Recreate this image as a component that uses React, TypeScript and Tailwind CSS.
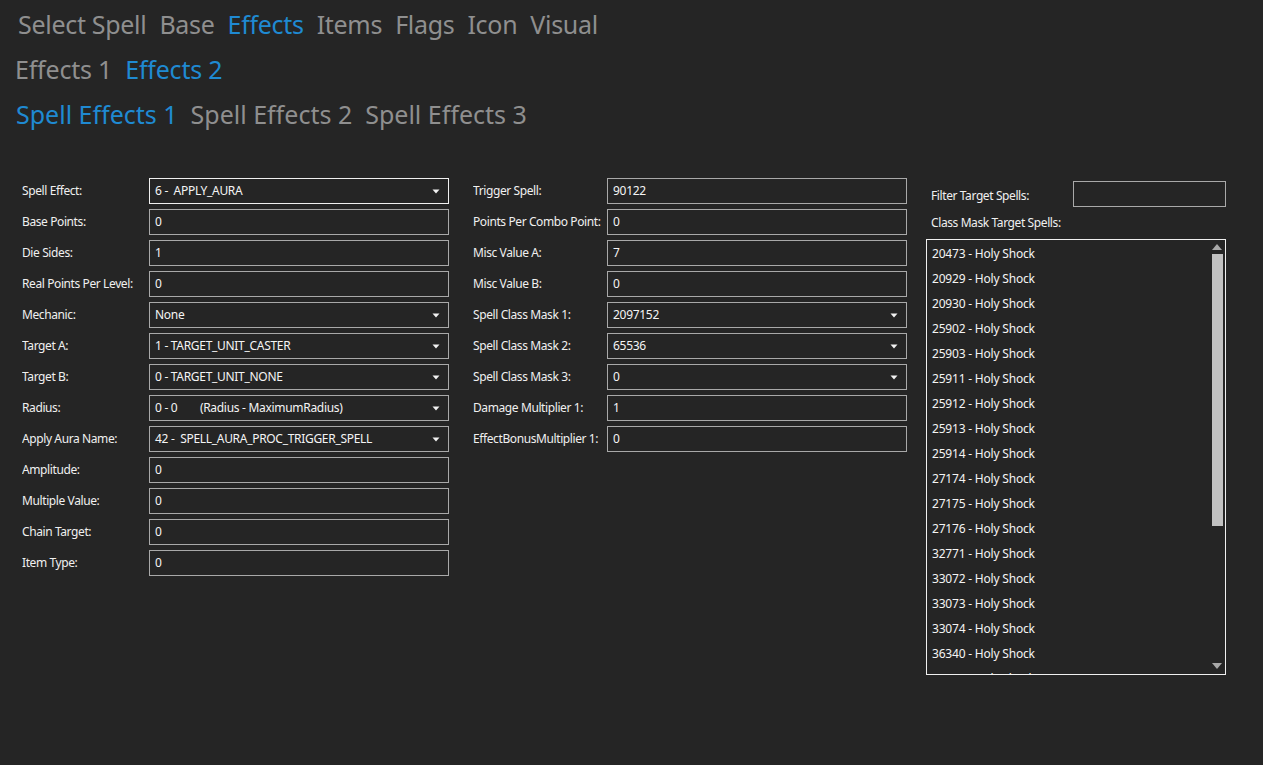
import React from "react";

const font = { fontFamily: '"Noto Sans", "Open Sans", sans-serif' };

function Tabs({ items, active, className }: { items: string[]; active: number; className: string }) {
  return (
    <div className={className}>
      {items.map((t, i) => (
        <span key={t} className={i === active ? "text-[#1f8ad2]" : "text-[#8f8f8f]"}>
          {t}
        </span>
      ))}
    </div>
  );
}

function Arrow() {
  return (
    <svg width="8" height="5" viewBox="0 0 8 5" className="shrink-0">
      <path d="M0.5 0.5 L7.5 0.5 L4 4.5 Z" fill="#f2f2f2" />
    </svg>
  );
}

function Field({ value, select, focus }: { value: React.ReactNode; select?: boolean; focus?: boolean }) {
  return (
    <div
      className={`flex h-[26px] flex-1 items-center justify-between border px-[5px] text-[12px] tracking-[-0.3px] text-[#f4f4f4] ${
        focus ? "border-[#f0f0f0]" : "border-[#a9a9a9]"
      }`}
    >
      <span className="whitespace-pre">{value}</span>
      {select && (
        <span className="mr-[3px]">
          <Arrow />
        </span>
      )}
    </div>
  );
}

function Row({ label, value, select, focus, lw }: { label: string; value: React.ReactNode; select?: boolean; focus?: boolean; lw: string }) {
  return (
    <div className="flex items-center">
      <div className={`${lw} shrink-0 overflow-hidden whitespace-nowrap text-[12px] tracking-[-0.4px] text-[#f0f0f0]`}>{label}</div>
      <Field value={value} select={select} focus={focus} />
    </div>
  );
}

const col1: [string, React.ReactNode, boolean?, boolean?][] = [
  ["Spell Effect:", "6 -  APPLY_AURA", true, true],
  ["Base Points:", "0"],
  ["Die Sides:", "1"],
  ["Real Points Per Level:", "0"],
  ["Mechanic:", "None", true],
  ["Target A:", "1 - TARGET_UNIT_CASTER", true],
  ["Target B:", "0 - TARGET_UNIT_NONE", true],
  ["Radius:", "0 - 0        (Radius - MaximumRadius)", true],
  ["Apply Aura Name:", "42 -  SPELL_AURA_PROC_TRIGGER_SPELL", true],
  ["Amplitude:", "0"],
  ["Multiple Value:", "0"],
  ["Chain Target:", "0"],
  ["Item Type:", "0"],
];

const col2: [string, React.ReactNode, boolean?][] = [
  ["Trigger Spell:", "90122"],
  ["Points Per Combo Point:", "0"],
  ["Misc Value A:", "7"],
  ["Misc Value B:", "0"],
  ["Spell Class Mask 1:", "2097152", true],
  ["Spell Class Mask 2:", "65536", true],
  ["Spell Class Mask 3:", "0", true],
  ["Damage Multiplier 1:", "1"],
  ["EffectBonusMultiplier 1:", "0"],
];

const spells = [
  "20473", "20929", "20930", "25902", "25903", "25911", "25912", "25913", "25914",
  "27174", "27175", "27176", "32771", "33072", "33073", "33074", "36340", "38384",
];

export default function App() {
  return (
    <div className="min-h-[765px] w-full bg-[#252525]" style={font}>
      <div className="pt-[2px]">
        <Tabs
          className="flex h-[45px] items-center gap-[13px] pl-[18px] text-[25px] tracking-[-0.3px]"
          items={["Select Spell", "Base", "Effects", "Items", "Flags", "Icon", "Visual"]}
          active={2}
        />
        <Tabs
          className="flex h-[45px] items-center gap-[13px] pl-[15px] text-[25px] tracking-[-0.2px]"
          items={["Effects 1", "Effects 2"]}
          active={1}
        />
        <Tabs
          className="flex h-[45px] items-center gap-[13px] pl-[16px] text-[25px] tracking-[0px]"
          items={["Spell Effects 1", "Spell Effects 2", "Spell Effects 3"]}
          active={0}
        />
      </div>
      <div className="mt-[41px] flex items-start">
        <div className="ml-[22px] flex w-[427px] flex-col gap-[5px]">
          {col1.map(([l, v, s, f]) => (
            <Row key={l} label={l} value={v} select={s} focus={f} lw="w-[127px]" />
          ))}
        </div>
        <div className="ml-[24px] flex w-[434px] flex-col gap-[5px]">
          {col2.map(([l, v, s]) => (
            <Row key={l} label={l} value={v} select={s} lw="w-[134px]" />
          ))}
        </div>
        <div className="ml-[19px] flex w-[300px] flex-col">
          <div className="mt-[3px] flex items-center">
            <div className="w-[147px] pl-[5px] pt-[3px] text-[12px] tracking-[-0.4px] text-[#f0f0f0]">Filter Target Spells:</div>
            <div className="h-[26px] flex-1 border border-[#a9a9a9]" />
          </div>
          <div className="mt-[4px] h-[24px] pl-[5px] text-[12px] leading-[24px] tracking-[-0.4px] text-[#f0f0f0]">Class Mask Target Spells:</div>
          <div className="mt-[4px] flex h-[436px] overflow-hidden border border-[#f0f0f0]">
            <div className="flex-1 overflow-hidden pt-[1px]">
              {spells.map((s) => (
                <div key={s} className="flex h-[25px] items-center pl-[5px] text-[12px] tracking-[-0.2px] text-[#f4f4f4]">
                  {s} - Holy Shock
                </div>
              ))}
            </div>
            <div className="flex w-[16px] flex-col items-center pt-[4px]">
              <svg width="10" height="6" viewBox="0 0 10 6">
                <path d="M0 6 L5 0 L10 6 Z" fill="#a8a8a8" />
              </svg>
              <div className="mt-[4px] h-[272px] w-[11px] bg-[#c1c1c1]" />
              <div className="flex-1" />
              <svg width="10" height="6" viewBox="0 0 10 6" className="mb-[5px]">
                <path d="M0 0 L10 0 L5 6 Z" fill="#a8a8a8" />
              </svg>
            </div>
          </div>
        </div>
      </div>
    </div>
  );
}
